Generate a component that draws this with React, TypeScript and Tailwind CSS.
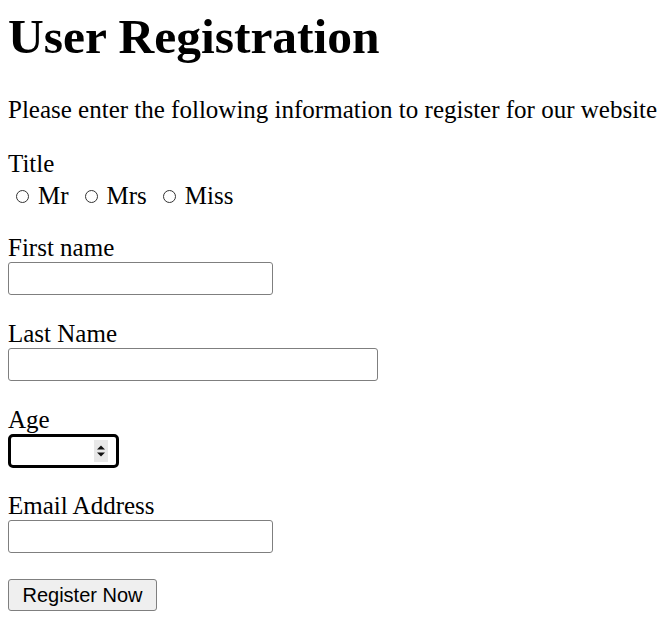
import React from 'react'

function Radio({ label }: { label: string }) {
  return (
    <label className="flex items-center">
      <span className="w-[13px] h-[13px] rounded-full border border-[#333] bg-white mr-[9px]" />
      <span>{label}</span>
    </label>
  )
}

function TextBox({ width }: { width: string }) {
  return (
    <input
      type="text"
      className={`${width} h-[33px] border border-[#7f7f7f] rounded-[3px] bg-white outline-none`}
    />
  )
}

export default function App() {
  return (
    <div className="min-h-screen bg-white px-2 pt-[9px] text-black font-['Liberation_Serif','Times_New_Roman',serif] text-[25px] leading-[26px]">
      <h1 className="text-[49.5px] leading-[56px] font-bold">User Registration</h1>
      <p className="mt-[32px] whitespace-nowrap">Please enter the following information to register for our website</p>

      <div className="mt-[28px]">Title</div>
      <div className="mt-[4px] h-[30px] flex items-center gap-[16px] pl-[8px]">
        <Radio label="Mr" />
        <Radio label="Mrs" />
        <Radio label="Miss" />
      </div>

      <div className="mt-[24px]">First name</div>
      <div className="mt-[1px]">
        <TextBox width="w-[265px]" />
      </div>

      <div className="mt-[26px]">Last Name</div>
      <div className="mt-[1px]">
        <TextBox width="w-[370px]" />
      </div>

      <div className="mt-[26px]">Age</div>
      <div className="mt-[1px] w-[111px] h-[34px] border-[3px] border-black rounded-[5px] bg-white flex items-center justify-end pr-[8px]">
        <span className="w-[14px] h-[22px] bg-[#e8e8e8] flex items-center justify-center">
          <svg width="10" height="14" viewBox="0 0 10 14">
            <path d="M1 5.5 L5 1.5 L9 5.5 Z" fill="#111" />
            <path d="M1 8.5 L5 12.5 L9 8.5 Z" fill="#111" />
          </svg>
        </span>
      </div>

      <div className="mt-[25px]">Email Address</div>
      <div className="mt-[1px]">
        <TextBox width="w-[265px]" />
      </div>

      <button className="mt-[26px] w-[149px] h-[32px] border border-[#7f7f7f] rounded-[3px] bg-[#efefef] font-['Liberation_Sans',Arial,sans-serif] text-[20px] leading-[24px] text-black">
        Register Now
      </button>
    </div>
  )
}
